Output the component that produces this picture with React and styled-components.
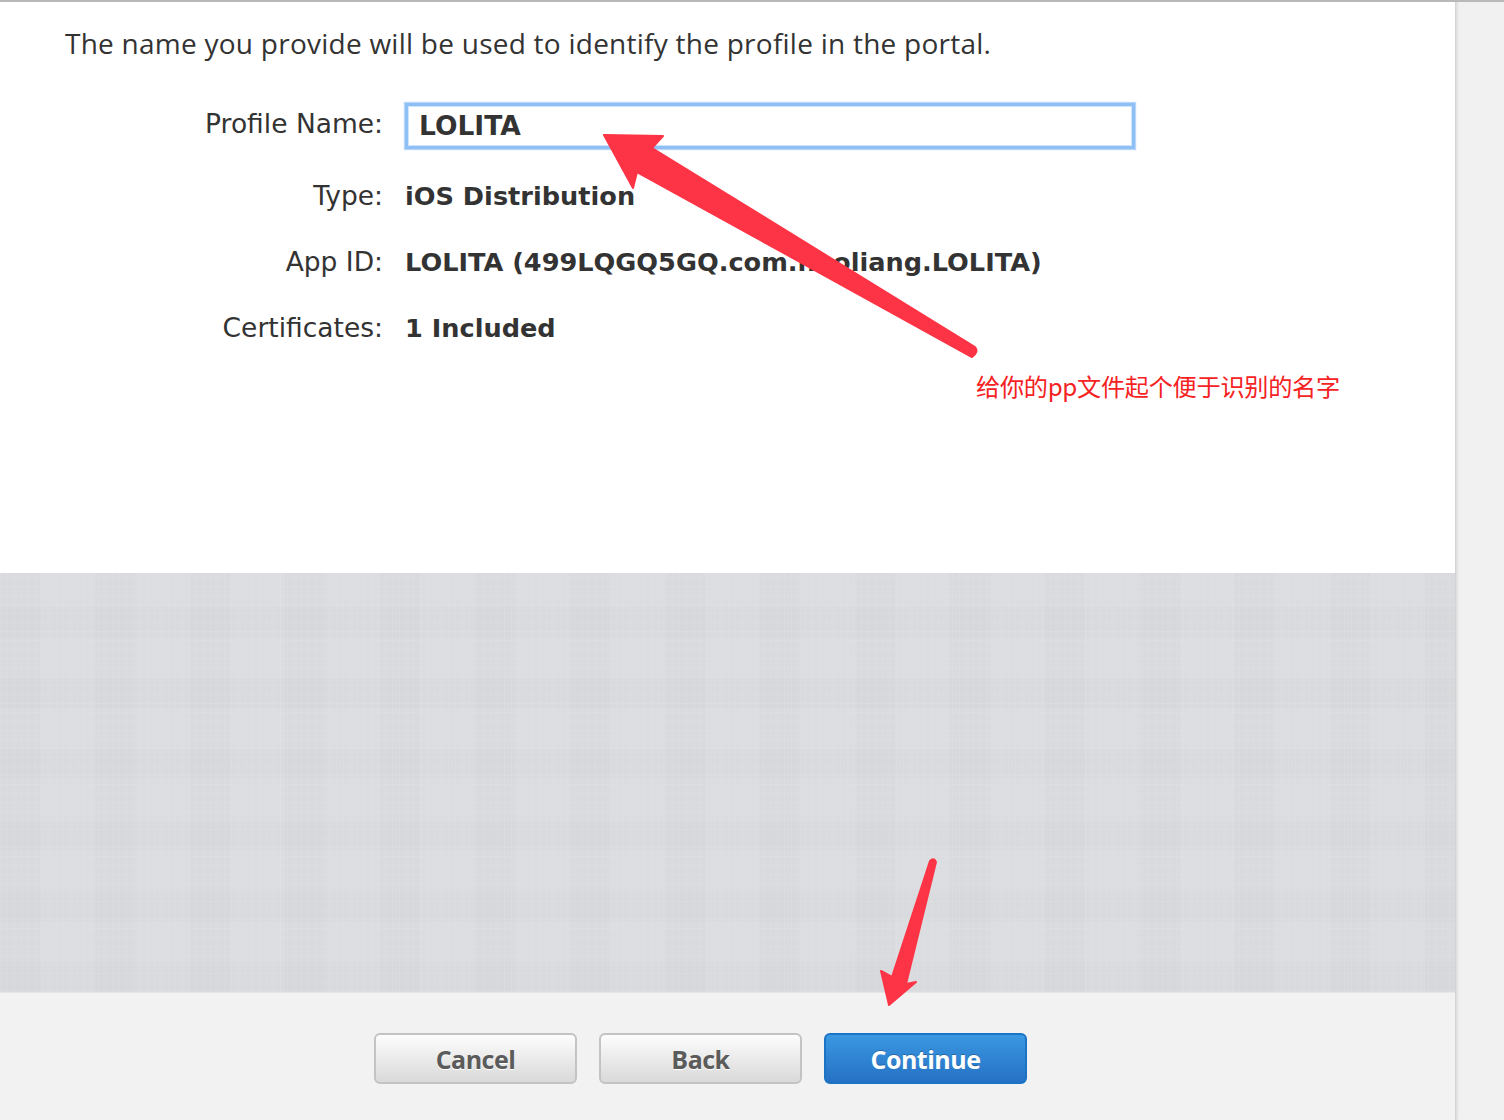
import React from "react";
import styled, { createGlobalStyle } from "styled-components";

const GlobalStyle = createGlobalStyle`
  html, body {
    margin: 0;
    padding: 0;
    background: #f1f1f1;
  }
  body {
    font-family: "DejaVu Sans", "Liberation Sans", sans-serif;
    color: #333;
  }
`;

const Page = styled.div`
  position: relative;
  width: 1504px;
  height: 1120px;
  overflow: hidden;
  border-top: 2px solid #b9b9b9;
  box-sizing: border-box;
  display: flex;
`;

const Main = styled.div`
  width: 1455px;
  display: flex;
  flex-direction: column;
`;

const Side = styled.div`
  flex: 1;
  background: #f1f1f1;
  border-left: 1px solid #d4d4d4;
  box-shadow: inset 3px 0 3px -2px rgba(0, 0, 0, 0.12);
`;

const Content = styled.div`
  height: 571px;
  background: #fff;
  padding: 24px 0 0 0;
  box-sizing: border-box;
`;

const Intro = styled.p`
  margin: 0 0 0 65px;
  font-family: "Open Sans", "Noto Sans", sans-serif;
  font-size: 28px;
  letter-spacing: 0.25px;
  line-height: 34px;
  color: #333;
`;

const Form = styled.div`
  margin-top: 43px;
  display: grid;
  grid-template-columns: 383px 1fr;
  column-gap: 22px;
`;

const Label = styled.div`
  text-align: right;
  font-size: 26.5px;
  color: #333;
  height: ${(p) => p.h}px;
  line-height: ${(p) => p.lh}px;
`;

const Value = styled.div`
  font-size: 25.6px;
  font-weight: bold;
  color: #333;
  height: ${(p) => p.h}px;
  line-height: ${(p) => p.lh}px;
`;

const Field = styled.div`
  width: 730px;
  height: 46px;
  box-sizing: border-box;
  border: 3px solid #8ec0f6;
  box-shadow: inset 0 0 0 1px #cfe3fb, 0 0 1px 1px #b7d6fa;
  display: flex;
  align-items: center;
  padding-left: 11px;
  font-size: 26.5px;
  font-weight: bold;
  color: #333;
`;

const Texture = styled.div`
  height: 419px;
  background-color: #dcdde0;
  background-image:
    repeating-linear-gradient(90deg, rgba(255,255,255,0.07) 0 1px, transparent 1px 7px),
    repeating-linear-gradient(0deg, rgba(255,255,255,0.07) 0 1px, transparent 1px 9px),
    repeating-linear-gradient(0deg, rgba(0,0,0,0.01) 0 30px, transparent 30px 71px),
    repeating-linear-gradient(90deg, rgba(0,0,0,0.01) 0 40px, transparent 40px 95px);
`;

const Footer = styled.div`
  flex: 1;
  background: #f2f2f2;
  border-top: 1px solid #e6e6e6;
  display: flex;
  justify-content: flex-start;
  padding: 40px 0 0 374px;
  gap: 22px;
  box-sizing: border-box;
`;

const Button = styled.button`
  width: 203px;
  height: 51px;
  border-radius: 6px;
  font-family: "Open Sans", "Noto Sans", sans-serif;
  font-size: 25px;
  font-weight: bold;
  letter-spacing: -0.5px;
  cursor: pointer;
  border: 2px solid ${(p) => (p.primary ? "#1a73c4" : "#c3c3c3")};
  color: ${(p) => (p.primary ? "#fff" : "#5b5b5b")};
  text-shadow: ${(p) => (p.primary ? "0 -1px 0 rgba(0,0,0,0.25)" : "0 1px 0 #fff")};
  background: ${(p) =>
    p.primary
      ? "linear-gradient(#3a98e2, #2671c4)"
      : "linear-gradient(#fdfdfd, #d9d9d9)"};
`;

const Note = styled.div`
  position: absolute;
  left: 976px;
  top: 366px;
  font-family: "Noto Sans CJK SC", "Noto Sans", sans-serif;
  font-size: 24.2px;
  color: #f5221f;
  letter-spacing: -0.3px;
`;

const Overlay = styled.svg`
  position: absolute;
  left: 0;
  top: -2px;
  pointer-events: none;
`;

const rows = [
  { label: "Type:", value: "iOS Distribution" },
  { label: "App ID:", value: "LOLITA (499LQGQ5GQ.com.haoliang.LOLITA)" },
  { label: "Certificates:", value: "1 Included" },
];

export default function App() {
  return (
    <>
      <GlobalStyle />
      <Page>
        <Main>
          <Content>
            <Intro>The name you provide will be used to identify the profile in the portal.</Intro>
            <Form>
              <Label h={46} lh={42}>Profile Name:</Label>
              <Value h={46} lh={46}>
                <Field>LOLITA</Field>
              </Value>
              {rows.map((r) => (
                <React.Fragment key={r.label}>
                  <Label h={66} lh={94}>{r.label}</Label>
                  <Value h={66} lh={94}>{r.value}</Value>
                </React.Fragment>
              ))}
            </Form>
          </Content>
          <Texture />
          <Footer>
            <Button>Cancel</Button>
            <Button>Back</Button>
            <Button primary>Continue</Button>
          </Footer>
        </Main>
        <Side />
        <Note>给你的pp文件起个便于识别的名字</Note>
        <Overlay width="1504" height="1120" viewBox="0 0 1504 1120">
          <path
            d="M604 135 L663 136 L652 148 L975 347 Q979 352 972 357 L637 172 L633 188 Z"
            fill="#fd3445"
            stroke="#fd3445"
            strokeWidth="2"
            strokeLinejoin="round"
          />
          <path
            d="M889 1005 L881 971 L892 977 L930 861 Q934 857 936 862 L906 984 L916 982 Z"
            fill="#fd3445"
            stroke="#fd3445"
            strokeWidth="2"
            strokeLinejoin="round"
          />
        </Overlay>
      </Page>
    </>
  );
}
